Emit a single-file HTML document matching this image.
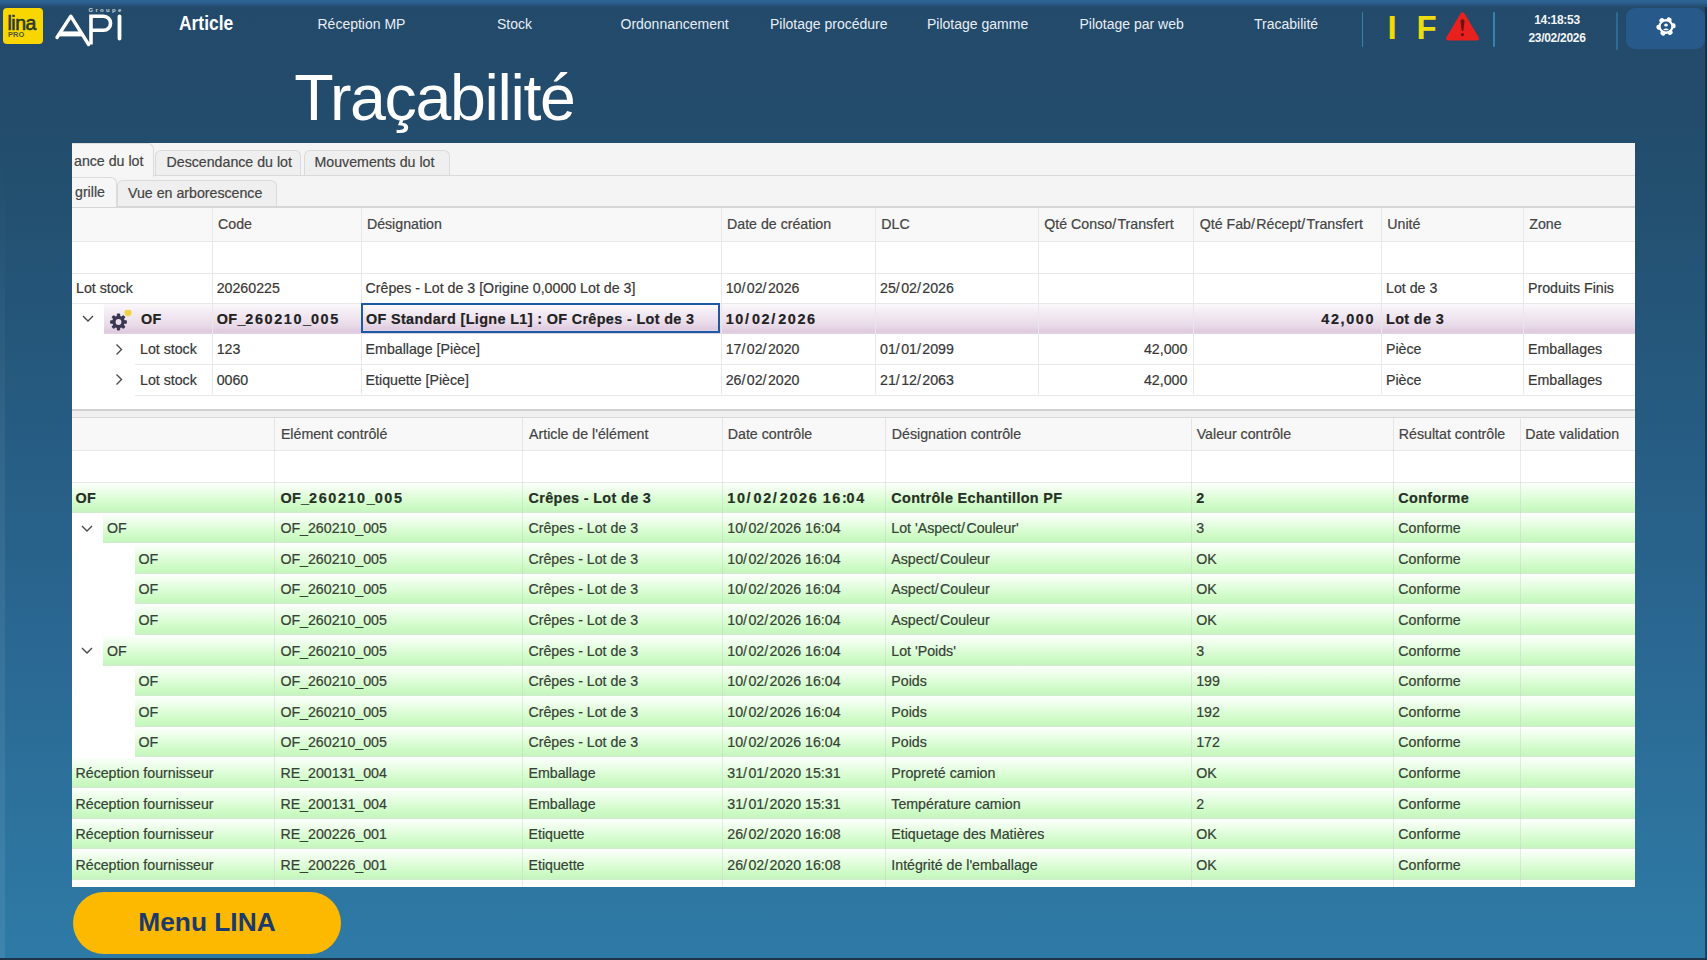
<!DOCTYPE html>
<html><head><meta charset="utf-8"><title>Traçabilité</title><style>
html,body{margin:0;padding:0}
body{width:1707px;height:960px;position:relative;overflow:hidden;font-family:"Liberation Sans",sans-serif;
background:linear-gradient(180deg,#234a6b 0px,#234b6c 110px,#235070 200px,#245578 300px,#29658f 600px,#2d75a0 860px,#2e7aa6 958px,#1d3347 958px,#1d3347 960px)}
.a{position:absolute}
.nav{position:absolute;top:16px;color:#e8eef5;font-size:14px;white-space:nowrap;line-height:17px}
.g{position:absolute;font-size:14.2px;color:#383838;white-space:nowrap;line-height:18px;-webkit-text-stroke:0.2px currentColor}
.b{font-weight:bold;font-size:14.4px;letter-spacing:0.35px;color:#222}
.h{color:#444}
.vl{position:absolute;width:1px;background:#e8e8e8}
.hl{position:absolute;height:1px;background:#e8e8e8}
</style></head><body>
<div class="a" style="left:1705.3px;top:3px;width:1.7px;height:955px;background:rgba(12,32,52,0.6)"></div>
<div class="a" style="left:0;top:150px;width:5px;height:808px;background:linear-gradient(180deg,rgba(255,255,255,0),rgba(255,255,255,0.06) 40%,rgba(255,255,255,0.08))"></div>
<div class="a" style="left:0;top:0;width:1707px;height:6.5px;background:linear-gradient(180deg,#2d6494 0%,#2c6190 30%,#285784 60%,#234a6b 100%)"></div>
<div class="a" style="left:3px;top:8px;width:40px;height:36px;background:#fad600;border-radius:4px"></div>
<div class="a" style="left:7.5px;top:12.5px;font-size:19.5px;color:#2a3a26;line-height:20px;letter-spacing:-0.5px;-webkit-text-stroke:0.6px #2a3a26">lina</div>
<div class="a" style="left:8px;top:30.2px;font-size:7.5px;font-weight:bold;color:#4a5a30;line-height:9px">PRO</div>
<svg class="a" style="left:50px;top:2px" width="80" height="48" viewBox="0 0 80 48">
<text x="38.5" y="9.6" font-family="Liberation Sans" font-size="6" font-weight="bold" fill="#c9d3dc" letter-spacing="2.3">Groupe</text>
<path d="M7 35.5 L20.8 14.2 L38.6 42.5" fill="none" stroke="#fff" stroke-width="3.4" stroke-linejoin="round" stroke-linecap="round"/>
<path d="M9.5 31.9 H32" stroke="#fff" stroke-width="5"/>
<path d="M41 42.5 V14.3 H53.6 A6.95 6.95 0 0 1 53.6 28.2 H42" fill="none" stroke="#fff" stroke-width="3.6"/>
<path d="M69.5 14.5 V36.5" stroke="#fff" stroke-width="3.8" stroke-linecap="round"/>
</svg>
<div class="nav" style="left:179px;top:11px;font-size:21px;font-weight:bold;color:#fff;line-height:24px;transform:scaleX(0.83);transform-origin:0 0">Article</div>
<div class="nav" style="left:317.5px">Réception MP</div>
<div class="nav" style="left:497px">Stock</div>
<div class="nav" style="left:620.5px">Ordonnancement</div>
<div class="nav" style="left:770px">Pilotage procédure</div>
<div class="nav" style="left:927px">Pilotage gamme</div>
<div class="nav" style="left:1079.5px">Pilotage par web</div>
<div class="nav" style="left:1254px">Tracabilité</div>
<div class="a" style="left:1361.5px;top:12px;width:1.7px;height:35px;background:#3683b0;border-radius:1px"></div>
<div class="a" style="left:1493px;top:12px;width:1.7px;height:35px;background:#3683b0;border-radius:1px"></div>
<div class="a" style="left:1616px;top:12px;width:1.7px;height:38px;background:#2e6a92;border-radius:1px"></div>
<div class="a" style="left:1387.5px;top:12px;font-size:33px;font-weight:bold;color:#f0dc00;line-height:31px">I</div>
<div class="a" style="left:1416.5px;top:12px;font-size:33px;font-weight:bold;color:#ecdc10;line-height:31px">F</div>
<svg class="a" style="left:1445px;top:11px" width="35" height="31" viewBox="0 0 35 31">
<path d="M17.5 1.2 Q18.7 1.2 19.5 2.6 L33.6 26.3 Q35 29.5 31.6 29.5 H3.4 Q0 29.5 1.4 26.3 L15.5 2.6 Q16.3 1.2 17.5 1.2 Z" fill="#e8211f"/>
<path d="M15.4 9.5 Q17.5 7.2 19.6 9.5 L18.3 20 H16.7 Z" fill="#6a1414"/>
<circle cx="17.5" cy="23.6" r="1.7" fill="#6a1414"/>
</svg>
<div class="a" style="left:1520px;top:10.5px;width:74px;text-align:center;font-size:12px;font-weight:bold;color:#f2f5f8;line-height:18px;letter-spacing:-0.3px">14:18:53<br>23/02/2026</div>
<div class="a" style="left:1626px;top:8px;width:79px;height:41px;background:#275a8b;border-radius:9px"></div>
<svg class="a" style="left:1654.5px;top:15.5px" width="22" height="21" viewBox="-11 -10.5 22 21">
<g fill="#fff" transform="rotate(25)">
<circle r="7.4"/>
<rect x="-2.5" y="-9.6" width="5" height="5" rx="2"/><rect x="-2.5" y="-9.6" width="5" height="5" rx="2" transform="rotate(60)"/>
<rect x="-2.5" y="-9.6" width="5" height="5" rx="2" transform="rotate(120)"/><rect x="-2.5" y="-9.6" width="5" height="5" rx="2" transform="rotate(180)"/>
<rect x="-2.5" y="-9.6" width="5" height="5" rx="2" transform="rotate(240)"/><rect x="-2.5" y="-9.6" width="5" height="5" rx="2" transform="rotate(300)"/>
</g>
<ellipse rx="5.3" ry="4.9" fill="#275789"/>
<ellipse cx="0" cy="-1.5" rx="1.9" ry="1.6" fill="#fff"/>
<path d="M-2.9 3.2 Q0 0.9 2.9 3.2 Q0 4.2 -2.9 3.2 Z" fill="#fff"/>
</svg>
<div class="a" style="left:294.3px;top:62.5px;font-size:64.5px;color:#fff;line-height:70px;letter-spacing:-1.35px">Traçabilité</div>
<div class="a" style="left:72px;top:143px;width:1563px;height:744px;background:#fff;overflow:hidden">
<div class="a" style="left:0;top:0;width:1563px;height:64px;background:#f4f4f4"></div>
<div class="a" style="left:0;top:32px;width:1563px;height:1px;background:#d9d9d9"></div>
<div class="a" style="left:0;top:63px;width:1563px;height:2px;background:#d6d6d6"></div>
<div class="a" style="left:83px;top:7px;width:146px;height:25px;background:#efefef;border:1px solid #dadada;border-bottom:none;border-radius:6px 6px 0 0;box-sizing:border-box"></div>
<div class="a" style="left:232px;top:7px;width:146px;height:25px;background:#efefef;border:1px solid #dadada;border-bottom:none;border-radius:6px 6px 0 0;box-sizing:border-box"></div>
<div class="a" style="left:-12px;top:0px;width:94px;height:34px;border:1px solid #dcdcdc;border-bottom:none;border-radius:0 6px 0 0;box-sizing:border-box;background:#f6f6f6"></div>
<div class="g h" style="left:2px;top:9px;color:#444">ance du lot</div>
<div class="g h" style="left:94.5px;top:10px;color:#444">Descendance du lot</div>
<div class="g h" style="left:242.5px;top:10px;color:#444">Mouvements du lot</div>
<div class="a" style="left:45px;top:37px;width:160px;height:26px;background:#efefef;border:1px solid #dadada;border-bottom:none;border-radius:6px 6px 0 0;box-sizing:border-box"></div>
<div class="a" style="left:-12px;top:34px;width:57px;height:30px;border:1px solid #dcdcdc;border-bottom:none;border-radius:0 6px 0 0;box-sizing:border-box;background:#f6f6f6"></div>
<div class="g h" style="left:3px;top:40px;color:#444">grille</div>
<div class="g h" style="left:56px;top:41px;color:#444">Vue en arborescence</div>
<div class="a" style="left:0;top:65px;width:1563px;height:33px;background:#f8f8f8"></div>
<div class="hl" style="left:0;top:98px;width:1563px"></div>
<div class="hl" style="left:0;top:129.60000000000002px;width:1563px"></div>
<div class="g h" style="left:146.0px;top:72px">Code</div>
<div class="g h" style="left:294.90000000000003px;top:72px">Désignation</div>
<div class="g h" style="left:655.0px;top:72px">Date de création</div>
<div class="g h" style="left:809.3px;top:72px">DLC</div>
<div class="g h" style="left:972.3px;top:72px">Qté Conso<span style="letter-spacing:1.40px">/</span>Transfert</div>
<div class="g h" style="left:1127.7px;top:72px">Qté Fab<span style="letter-spacing:1.40px">/</span>Récept<span style="letter-spacing:1.40px">/</span>Transfert</div>
<div class="g h" style="left:1315.3px;top:72px">Unité</div>
<div class="g h" style="left:1457.3px;top:72px">Zone</div>
<div class="hl" style="left:0px;top:160.15000000000003px;width:1563px"></div>
<div class="g" style="left:4px;top:136.10000000000002px">Lot stock</div>
<div class="g" style="left:144.7px;top:136.10000000000002px">20260225</div>
<div class="g" style="left:293.6px;top:136.10000000000002px">Crêpes - Lot de 3 [Origine 0,0000 Lot de 3]</div>
<div class="g" style="left:653.7px;top:136.10000000000002px">10<span style="letter-spacing:1.40px">/</span>02<span style="letter-spacing:1.40px">/</span>2026</div>
<div class="g" style="left:808px;top:136.10000000000002px">25<span style="letter-spacing:1.40px">/</span>02<span style="letter-spacing:1.40px">/</span>2026</div>
<div class="g" style="left:1314px;top:136.10000000000002px">Lot de 3</div>
<div class="g" style="left:1456px;top:136.10000000000002px">Produits Finis</div>
<div class="a" style="left:31.700000000000003px;top:160.65000000000003px;width:1531.3px;height:30.05px;background:linear-gradient(180deg,#fbf8fb 0%,#f3ebf3 30%,#e9dbe9 70%,#dfcbdf 92%,#e4d4e4 100%)"></div>
<div class="g b" style="left:69px;top:166.65000000000003px">OF</div>
<div class="g b" style="left:144.7px;top:166.65000000000003px">OF<span style="letter-spacing:-0.05px">_</span><span style="letter-spacing:1.60px">2</span><span style="letter-spacing:1.60px">6</span><span style="letter-spacing:1.60px">0</span><span style="letter-spacing:1.60px">2</span><span style="letter-spacing:1.60px">1</span><span style="letter-spacing:1.60px">0</span><span style="letter-spacing:-0.05px">_</span><span style="letter-spacing:1.60px">0</span><span style="letter-spacing:1.60px">0</span><span style="letter-spacing:1.60px">5</span></div>
<div class="g b" style="left:293.6px;top:166.65000000000003px">OF Standard [Ligne L<span style="letter-spacing:1.60px">1</span>] <span style="letter-spacing:-0.15px">:</span> OF Crêpes - Lot de <span style="letter-spacing:1.60px">3</span></div>
<div class="g b" style="left:653.7px;top:166.65000000000003px"><span style="letter-spacing:1.60px">1</span><span style="letter-spacing:1.60px">0</span><span style="letter-spacing:3.05px">/</span><span style="letter-spacing:1.60px">0</span><span style="letter-spacing:1.60px">2</span><span style="letter-spacing:3.05px">/</span><span style="letter-spacing:1.60px">2</span><span style="letter-spacing:1.60px">0</span><span style="letter-spacing:1.60px">2</span><span style="letter-spacing:1.60px">6</span></div>
<div class="g b" style="left:1121.4px;top:166.65000000000003px;width:181.5999999999999px;text-align:right"><span style="letter-spacing:1.60px">4</span><span style="letter-spacing:1.60px">2</span><span style="letter-spacing:1.59px">,</span><span style="letter-spacing:1.60px">0</span><span style="letter-spacing:1.60px">0</span><span style="letter-spacing:1.60px">0</span></div>
<div class="g b" style="left:1314px;top:166.65000000000003px">Lot de <span style="letter-spacing:1.60px">3</span></div>
<svg class="a" style="left:9px;top:171.15000000000003px" width="14" height="9" viewBox="0 0 14 9"><path d="M2 2 L7 7 L12 2" fill="none" stroke="#4a4a4a" stroke-width="1.4"/></svg>
<svg class="a" style="left:36px;top:167.35000000000002px" width="26" height="24" viewBox="0 0 26 24">
<g transform="translate(10.5 12)" fill="#3b3752"><circle r="6.2"/>
<rect x="-1.7" y="-8.4" width="3.4" height="4" rx="0.8"/><rect x="-1.7" y="-8.4" width="3.4" height="4" rx="0.8" transform="rotate(45)"/>
<rect x="-1.7" y="-8.4" width="3.4" height="4" rx="0.8" transform="rotate(90)"/><rect x="-1.7" y="-8.4" width="3.4" height="4" rx="0.8" transform="rotate(135)"/>
<rect x="-1.7" y="-8.4" width="3.4" height="4" rx="0.8" transform="rotate(180)"/><rect x="-1.7" y="-8.4" width="3.4" height="4" rx="0.8" transform="rotate(225)"/>
<rect x="-1.7" y="-8.4" width="3.4" height="4" rx="0.8" transform="rotate(270)"/><rect x="-1.7" y="-8.4" width="3.4" height="4" rx="0.8" transform="rotate(315)"/>
<circle r="2.9" fill="#ece0ec"/></g>
<circle cx="20" cy="2.7" r="3.5" fill="#eed23e" stroke="#f5e27a" stroke-width="0.6"/></svg>
<div class="hl" style="left:63px;top:221.25000000000006px;width:1500px"></div>
<div class="g" style="left:68px;top:197.20000000000005px">Lot stock</div>
<div class="g" style="left:144.7px;top:197.20000000000005px">123</div>
<div class="g" style="left:293.6px;top:197.20000000000005px">Emballage [Pièce]</div>
<div class="g" style="left:653.7px;top:197.20000000000005px">17<span style="letter-spacing:1.40px">/</span>02<span style="letter-spacing:1.40px">/</span>2020</div>
<div class="g" style="left:808px;top:197.20000000000005px">01<span style="letter-spacing:1.40px">/</span>01<span style="letter-spacing:1.40px">/</span>2099</div>
<div class="g" style="left:966px;top:197.20000000000005px;width:149.4000000000001px;text-align:right">42,000</div>
<div class="g" style="left:1314px;top:197.20000000000005px">Pièce</div>
<div class="g" style="left:1456px;top:197.20000000000005px">Emballages</div>
<svg class="a" style="left:42px;top:199.70000000000005px" width="10" height="13" viewBox="0 0 10 13"><path d="M2.5 1.5 L7.5 6.5 L2.5 11.5" fill="none" stroke="#4a4a4a" stroke-width="1.4"/></svg>
<div class="hl" style="left:63px;top:251.8px;width:1500px"></div>
<div class="g" style="left:68px;top:227.75px">Lot stock</div>
<div class="g" style="left:144.7px;top:227.75px">0060</div>
<div class="g" style="left:293.6px;top:227.75px">Etiquette [Pièce]</div>
<div class="g" style="left:653.7px;top:227.75px">26<span style="letter-spacing:1.40px">/</span>02<span style="letter-spacing:1.40px">/</span>2020</div>
<div class="g" style="left:808px;top:227.75px">21<span style="letter-spacing:1.40px">/</span>12<span style="letter-spacing:1.40px">/</span>2063</div>
<div class="g" style="left:966px;top:227.75px;width:149.4000000000001px;text-align:right">42,000</div>
<div class="g" style="left:1314px;top:227.75px">Pièce</div>
<div class="g" style="left:1456px;top:227.75px">Emballages</div>
<svg class="a" style="left:42px;top:230.25px" width="10" height="13" viewBox="0 0 10 13"><path d="M2.5 1.5 L7.5 6.5 L2.5 11.5" fill="none" stroke="#4a4a4a" stroke-width="1.4"/></svg>
<div class="vl" style="left:139.7px;top:65px;height:186px"></div>
<div class="vl" style="left:288.6px;top:65px;height:186px"></div>
<div class="vl" style="left:648.7px;top:65px;height:186px"></div>
<div class="vl" style="left:803px;top:65px;height:186px"></div>
<div class="vl" style="left:966px;top:65px;height:186px"></div>
<div class="vl" style="left:1121.4px;top:65px;height:186px"></div>
<div class="vl" style="left:1309px;top:65px;height:186px"></div>
<div class="vl" style="left:1451px;top:65px;height:186px"></div>
<div class="a" style="left:289px;top:160.39999999999998px;width:359px;height:30.0px;border:2px solid #1d5aa6;box-sizing:border-box;background:linear-gradient(180deg,#fbf8fb 0%,#f3ebf3 30%,#e9dbe9 70%,#dfcbdf 92%,#e4d4e4 100%)"></div>
<div class="g b" style="left:294px;top:166.64999999999998px">OF Standard [Ligne L1] : OF Crêpes - Lot de 3</div>
<div class="a" style="left:0;top:266px;width:1563px;height:2px;background:#d0d0d0"></div>
<div class="a" style="left:0;top:268px;width:1563px;height:6px;background:#f0f0f0"></div>
<div class="a" style="left:0;top:274px;width:1563px;height:1px;background:#dadada"></div>
<div class="a" style="left:0;top:275px;width:1563px;height:32.19999999999999px;background:#f8f8f8"></div>
<div class="hl" style="left:0;top:307.2px;width:1563px"></div>
<div class="hl" style="left:0;top:339px;width:1563px"></div>
<div class="g h" style="left:208.90000000000003px;top:282px">Elément contrôlé</div>
<div class="g h" style="left:457.0px;top:282px">Article de l&#x27;élément</div>
<div class="g h" style="left:655.8px;top:282px">Date contrôle</div>
<div class="g h" style="left:819.8px;top:282px">Désignation contrôle</div>
<div class="g h" style="left:1124.7px;top:282px">Valeur contrôle</div>
<div class="g h" style="left:1326.8px;top:282px">Résultat contrôle</div>
<div class="g h" style="left:1453.3px;top:282px">Date validation</div>
<div class="a" style="left:0px;top:340.0px;width:1563px;height:29.6px;background:linear-gradient(180deg,#fbfffa 0%,#f3fff1 15%,#ddfdd7 50%,#cafac2 82%,#c7f6c0 92%,#d0ebcd 100%)"></div>
<div class="g b" style="left:3.5px;top:345.5px;color:#263026">OF</div>
<div class="g b" style="left:208.40000000000003px;top:345.5px;color:#263026">OF<span style="letter-spacing:-0.05px">_</span><span style="letter-spacing:1.60px">2</span><span style="letter-spacing:1.60px">6</span><span style="letter-spacing:1.60px">0</span><span style="letter-spacing:1.60px">2</span><span style="letter-spacing:1.60px">1</span><span style="letter-spacing:1.60px">0</span><span style="letter-spacing:-0.05px">_</span><span style="letter-spacing:1.60px">0</span><span style="letter-spacing:1.60px">0</span><span style="letter-spacing:1.60px">5</span></div>
<div class="g b" style="left:456.5px;top:345.5px;color:#263026">Crêpes - Lot de <span style="letter-spacing:1.60px">3</span></div>
<div class="g b" style="left:655.3px;top:345.5px;color:#263026"><span style="letter-spacing:1.60px">1</span><span style="letter-spacing:1.60px">0</span><span style="letter-spacing:3.05px">/</span><span style="letter-spacing:1.60px">0</span><span style="letter-spacing:1.60px">2</span><span style="letter-spacing:3.05px">/</span><span style="letter-spacing:1.60px">2</span><span style="letter-spacing:1.60px">0</span><span style="letter-spacing:1.60px">2</span><span style="letter-spacing:1.60px">6</span> <span style="letter-spacing:1.60px">1</span><span style="letter-spacing:1.60px">6</span><span style="letter-spacing:-0.15px">:</span><span style="letter-spacing:1.60px">0</span><span style="letter-spacing:1.60px">4</span></div>
<div class="g b" style="left:819.3px;top:345.5px;color:#263026">Contrôle Echantillon PF</div>
<div class="g b" style="left:1124.2px;top:345.5px;color:#263026"><span style="letter-spacing:1.60px">2</span></div>
<div class="g b" style="left:1326.3px;top:345.5px;color:#263026">Conforme</div>
<div class="a" style="left:31px;top:370.6px;width:1532px;height:29.6px;background:linear-gradient(180deg,#fbfffa 0%,#f3fff1 15%,#ddfdd7 50%,#cafac2 82%,#c7f6c0 92%,#d0ebcd 100%)"></div>
<div class="g" style="left:35px;top:376.1px;color:#364236">OF</div>
<div class="g" style="left:208.40000000000003px;top:376.1px;color:#364236">OF_260210_005</div>
<div class="g" style="left:456.5px;top:376.1px;color:#364236">Crêpes - Lot de 3</div>
<div class="g" style="left:655.3px;top:376.1px;color:#364236">10<span style="letter-spacing:1.40px">/</span>02<span style="letter-spacing:1.40px">/</span>2026 16:04</div>
<div class="g" style="left:819.3px;top:376.1px;color:#364236">Lot &#x27;Aspect<span style="letter-spacing:1.40px">/</span>Couleur&#x27;</div>
<div class="g" style="left:1124.2px;top:376.1px;color:#364236">3</div>
<div class="g" style="left:1326.3px;top:376.1px;color:#364236">Conforme</div>
<svg class="a" style="left:8px;top:380.6px" width="14" height="9" viewBox="0 0 14 9"><path d="M2 2 L7 7 L12 2" fill="none" stroke="#4a4a4a" stroke-width="1.4"/></svg>
<div class="a" style="left:63px;top:401.20000000000005px;width:1500px;height:29.6px;background:linear-gradient(180deg,#fbfffa 0%,#f3fff1 15%,#ddfdd7 50%,#cafac2 82%,#c7f6c0 92%,#d0ebcd 100%)"></div>
<div class="g" style="left:66.5px;top:406.70000000000005px;color:#364236">OF</div>
<div class="g" style="left:208.40000000000003px;top:406.70000000000005px;color:#364236">OF_260210_005</div>
<div class="g" style="left:456.5px;top:406.70000000000005px;color:#364236">Crêpes - Lot de 3</div>
<div class="g" style="left:655.3px;top:406.70000000000005px;color:#364236">10<span style="letter-spacing:1.40px">/</span>02<span style="letter-spacing:1.40px">/</span>2026 16:04</div>
<div class="g" style="left:819.3px;top:406.70000000000005px;color:#364236">Aspect<span style="letter-spacing:1.40px">/</span>Couleur</div>
<div class="g" style="left:1124.2px;top:406.70000000000005px;color:#364236">OK</div>
<div class="g" style="left:1326.3px;top:406.70000000000005px;color:#364236">Conforme</div>
<div class="a" style="left:63px;top:431.79999999999995px;width:1500px;height:29.6px;background:linear-gradient(180deg,#fbfffa 0%,#f3fff1 15%,#ddfdd7 50%,#cafac2 82%,#c7f6c0 92%,#d0ebcd 100%)"></div>
<div class="g" style="left:66.5px;top:437.29999999999995px;color:#364236">OF</div>
<div class="g" style="left:208.40000000000003px;top:437.29999999999995px;color:#364236">OF_260210_005</div>
<div class="g" style="left:456.5px;top:437.29999999999995px;color:#364236">Crêpes - Lot de 3</div>
<div class="g" style="left:655.3px;top:437.29999999999995px;color:#364236">10<span style="letter-spacing:1.40px">/</span>02<span style="letter-spacing:1.40px">/</span>2026 16:04</div>
<div class="g" style="left:819.3px;top:437.29999999999995px;color:#364236">Aspect<span style="letter-spacing:1.40px">/</span>Couleur</div>
<div class="g" style="left:1124.2px;top:437.29999999999995px;color:#364236">OK</div>
<div class="g" style="left:1326.3px;top:437.29999999999995px;color:#364236">Conforme</div>
<div class="a" style="left:63px;top:462.4px;width:1500px;height:29.6px;background:linear-gradient(180deg,#fbfffa 0%,#f3fff1 15%,#ddfdd7 50%,#cafac2 82%,#c7f6c0 92%,#d0ebcd 100%)"></div>
<div class="g" style="left:66.5px;top:467.9px;color:#364236">OF</div>
<div class="g" style="left:208.40000000000003px;top:467.9px;color:#364236">OF_260210_005</div>
<div class="g" style="left:456.5px;top:467.9px;color:#364236">Crêpes - Lot de 3</div>
<div class="g" style="left:655.3px;top:467.9px;color:#364236">10<span style="letter-spacing:1.40px">/</span>02<span style="letter-spacing:1.40px">/</span>2026 16:04</div>
<div class="g" style="left:819.3px;top:467.9px;color:#364236">Aspect<span style="letter-spacing:1.40px">/</span>Couleur</div>
<div class="g" style="left:1124.2px;top:467.9px;color:#364236">OK</div>
<div class="g" style="left:1326.3px;top:467.9px;color:#364236">Conforme</div>
<div class="a" style="left:31px;top:493.0px;width:1532px;height:29.6px;background:linear-gradient(180deg,#fbfffa 0%,#f3fff1 15%,#ddfdd7 50%,#cafac2 82%,#c7f6c0 92%,#d0ebcd 100%)"></div>
<div class="g" style="left:35px;top:498.5px;color:#364236">OF</div>
<div class="g" style="left:208.40000000000003px;top:498.5px;color:#364236">OF_260210_005</div>
<div class="g" style="left:456.5px;top:498.5px;color:#364236">Crêpes - Lot de 3</div>
<div class="g" style="left:655.3px;top:498.5px;color:#364236">10<span style="letter-spacing:1.40px">/</span>02<span style="letter-spacing:1.40px">/</span>2026 16:04</div>
<div class="g" style="left:819.3px;top:498.5px;color:#364236">Lot &#x27;Poids&#x27;</div>
<div class="g" style="left:1124.2px;top:498.5px;color:#364236">3</div>
<div class="g" style="left:1326.3px;top:498.5px;color:#364236">Conforme</div>
<svg class="a" style="left:8px;top:503.0px" width="14" height="9" viewBox="0 0 14 9"><path d="M2 2 L7 7 L12 2" fill="none" stroke="#4a4a4a" stroke-width="1.4"/></svg>
<div class="a" style="left:63px;top:523.6px;width:1500px;height:29.6px;background:linear-gradient(180deg,#fbfffa 0%,#f3fff1 15%,#ddfdd7 50%,#cafac2 82%,#c7f6c0 92%,#d0ebcd 100%)"></div>
<div class="g" style="left:66.5px;top:529.1px;color:#364236">OF</div>
<div class="g" style="left:208.40000000000003px;top:529.1px;color:#364236">OF_260210_005</div>
<div class="g" style="left:456.5px;top:529.1px;color:#364236">Crêpes - Lot de 3</div>
<div class="g" style="left:655.3px;top:529.1px;color:#364236">10<span style="letter-spacing:1.40px">/</span>02<span style="letter-spacing:1.40px">/</span>2026 16:04</div>
<div class="g" style="left:819.3px;top:529.1px;color:#364236">Poids</div>
<div class="g" style="left:1124.2px;top:529.1px;color:#364236">199</div>
<div class="g" style="left:1326.3px;top:529.1px;color:#364236">Conforme</div>
<div class="a" style="left:63px;top:554.2px;width:1500px;height:29.6px;background:linear-gradient(180deg,#fbfffa 0%,#f3fff1 15%,#ddfdd7 50%,#cafac2 82%,#c7f6c0 92%,#d0ebcd 100%)"></div>
<div class="g" style="left:66.5px;top:559.7px;color:#364236">OF</div>
<div class="g" style="left:208.40000000000003px;top:559.7px;color:#364236">OF_260210_005</div>
<div class="g" style="left:456.5px;top:559.7px;color:#364236">Crêpes - Lot de 3</div>
<div class="g" style="left:655.3px;top:559.7px;color:#364236">10<span style="letter-spacing:1.40px">/</span>02<span style="letter-spacing:1.40px">/</span>2026 16:04</div>
<div class="g" style="left:819.3px;top:559.7px;color:#364236">Poids</div>
<div class="g" style="left:1124.2px;top:559.7px;color:#364236">192</div>
<div class="g" style="left:1326.3px;top:559.7px;color:#364236">Conforme</div>
<div class="a" style="left:63px;top:584.8px;width:1500px;height:29.6px;background:linear-gradient(180deg,#fbfffa 0%,#f3fff1 15%,#ddfdd7 50%,#cafac2 82%,#c7f6c0 92%,#d0ebcd 100%)"></div>
<div class="g" style="left:66.5px;top:590.3px;color:#364236">OF</div>
<div class="g" style="left:208.40000000000003px;top:590.3px;color:#364236">OF_260210_005</div>
<div class="g" style="left:456.5px;top:590.3px;color:#364236">Crêpes - Lot de 3</div>
<div class="g" style="left:655.3px;top:590.3px;color:#364236">10<span style="letter-spacing:1.40px">/</span>02<span style="letter-spacing:1.40px">/</span>2026 16:04</div>
<div class="g" style="left:819.3px;top:590.3px;color:#364236">Poids</div>
<div class="g" style="left:1124.2px;top:590.3px;color:#364236">172</div>
<div class="g" style="left:1326.3px;top:590.3px;color:#364236">Conforme</div>
<div class="a" style="left:0px;top:615.4000000000001px;width:1563px;height:29.6px;background:linear-gradient(180deg,#fbfffa 0%,#f3fff1 15%,#ddfdd7 50%,#cafac2 82%,#c7f6c0 92%,#d0ebcd 100%)"></div>
<div class="g" style="left:3.5px;top:620.9000000000001px;color:#364236">Réception fournisseur</div>
<div class="g" style="left:208.40000000000003px;top:620.9000000000001px;color:#364236">RE_200131_004</div>
<div class="g" style="left:456.5px;top:620.9000000000001px;color:#364236">Emballage</div>
<div class="g" style="left:655.3px;top:620.9000000000001px;color:#364236">31<span style="letter-spacing:1.40px">/</span>01<span style="letter-spacing:1.40px">/</span>2020 15:31</div>
<div class="g" style="left:819.3px;top:620.9000000000001px;color:#364236">Propreté camion</div>
<div class="g" style="left:1124.2px;top:620.9000000000001px;color:#364236">OK</div>
<div class="g" style="left:1326.3px;top:620.9000000000001px;color:#364236">Conforme</div>
<div class="a" style="left:0px;top:646.0px;width:1563px;height:29.6px;background:linear-gradient(180deg,#fbfffa 0%,#f3fff1 15%,#ddfdd7 50%,#cafac2 82%,#c7f6c0 92%,#d0ebcd 100%)"></div>
<div class="g" style="left:3.5px;top:651.5px;color:#364236">Réception fournisseur</div>
<div class="g" style="left:208.40000000000003px;top:651.5px;color:#364236">RE_200131_004</div>
<div class="g" style="left:456.5px;top:651.5px;color:#364236">Emballage</div>
<div class="g" style="left:655.3px;top:651.5px;color:#364236">31<span style="letter-spacing:1.40px">/</span>01<span style="letter-spacing:1.40px">/</span>2020 15:31</div>
<div class="g" style="left:819.3px;top:651.5px;color:#364236">Température camion</div>
<div class="g" style="left:1124.2px;top:651.5px;color:#364236">2</div>
<div class="g" style="left:1326.3px;top:651.5px;color:#364236">Conforme</div>
<div class="a" style="left:0px;top:676.6px;width:1563px;height:29.6px;background:linear-gradient(180deg,#fbfffa 0%,#f3fff1 15%,#ddfdd7 50%,#cafac2 82%,#c7f6c0 92%,#d0ebcd 100%)"></div>
<div class="g" style="left:3.5px;top:682.1px;color:#364236">Réception fournisseur</div>
<div class="g" style="left:208.40000000000003px;top:682.1px;color:#364236">RE_200226_001</div>
<div class="g" style="left:456.5px;top:682.1px;color:#364236">Etiquette</div>
<div class="g" style="left:655.3px;top:682.1px;color:#364236">26<span style="letter-spacing:1.40px">/</span>02<span style="letter-spacing:1.40px">/</span>2020 16:08</div>
<div class="g" style="left:819.3px;top:682.1px;color:#364236">Etiquetage des Matières</div>
<div class="g" style="left:1124.2px;top:682.1px;color:#364236">OK</div>
<div class="g" style="left:1326.3px;top:682.1px;color:#364236">Conforme</div>
<div class="a" style="left:0px;top:707.2px;width:1563px;height:29.6px;background:linear-gradient(180deg,#fbfffa 0%,#f3fff1 15%,#ddfdd7 50%,#cafac2 82%,#c7f6c0 92%,#d0ebcd 100%)"></div>
<div class="g" style="left:3.5px;top:712.7px;color:#364236">Réception fournisseur</div>
<div class="g" style="left:208.40000000000003px;top:712.7px;color:#364236">RE_200226_001</div>
<div class="g" style="left:456.5px;top:712.7px;color:#364236">Etiquette</div>
<div class="g" style="left:655.3px;top:712.7px;color:#364236">26<span style="letter-spacing:1.40px">/</span>02<span style="letter-spacing:1.40px">/</span>2020 16:08</div>
<div class="g" style="left:819.3px;top:712.7px;color:#364236">Intégrité de l&#x27;emballage</div>
<div class="g" style="left:1124.2px;top:712.7px;color:#364236">OK</div>
<div class="g" style="left:1326.3px;top:712.7px;color:#364236">Conforme</div>
<div class="vl" style="left:201.75px;top:275px;height:469px;background:rgba(200,200,200,0.38)"></div>
<div class="vl" style="left:450.29999999999995px;top:275px;height:469px;background:rgba(200,200,200,0.38)"></div>
<div class="vl" style="left:650.1px;top:275px;height:469px;background:rgba(200,200,200,0.38)"></div>
<div class="vl" style="left:813.4px;top:275px;height:469px;background:rgba(200,200,200,0.38)"></div>
<div class="vl" style="left:1119.0px;top:275px;height:469px;background:rgba(200,200,200,0.38)"></div>
<div class="vl" style="left:1320.7px;top:275px;height:469px;background:rgba(200,200,200,0.38)"></div>
<div class="vl" style="left:1447.8px;top:275px;height:469px;background:rgba(200,200,200,0.38)"></div>
</div>
<div class="a" style="left:73px;top:892px;width:268px;height:62px;background:#fcb900;border-radius:31px"></div>
<div class="a" style="left:73px;top:906px;width:268px;text-align:center;font-size:26.3px;font-weight:bold;color:#1d3a6c;line-height:32px">Menu LINA</div>
</body></html>
